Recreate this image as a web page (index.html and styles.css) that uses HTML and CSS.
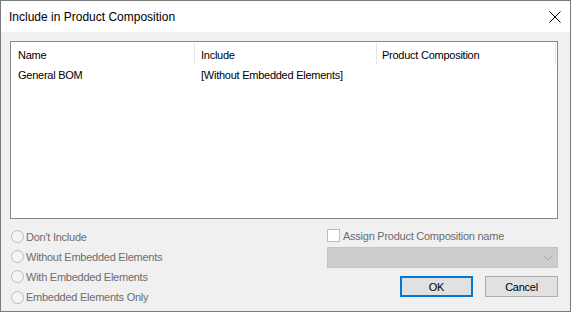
FILE: index.html
```html
<!DOCTYPE html>
<html lang="en">

<head>
  <meta charset="UTF-8">
  <title>Include in Product Composition</title>
  <link rel="stylesheet" href="styles.css">
</head>

<body>

  <div class="window">
    <div class="titlebar">
      <span class="title">Include in Product Composition</span>
      <span class="close">
        <svg width="12" height="12" viewBox="0 0 12 12">
          <path d="M0.5 0.5 L11.5 11.5 M11.5 0.5 L0.5 11.5" stroke="#000" stroke-width="1" fill="none" />
        </svg>
      </span>
    </div>

    <div class="dialog-body">
      <div class="list">
        <div class="list-header">
          <div class="col col-name">Name</div>
          <div class="col col-include">Include</div>
          <div class="col col-comp">Product Composition</div>
        </div>
        <div class="list-row">
          <div class="col col-name">General BOM</div>
          <div class="col col-include">[Without Embedded Elements]</div>
          <div class="col col-comp"></div>
        </div>
      </div>

      <div class="lower">
        <div class="options">
          <label class="radio row-a"><span class="dot"></span>Don't Include</label>
          <label class="radio row-b"><span class="dot"></span>Without Embedded Elements</label>
          <label class="radio row-c"><span class="dot"></span>With Embedded Elements</label>
          <label class="radio row-d"><span class="dot"></span>Embedded Elements Only</label>
        </div>

        <div class="assign">
          <label class="check"><span class="box"></span>Assign Product Composition name</label>
          <div class="combo">
            <svg width="10" height="6" viewBox="0 0 10 6">
              <polyline points="0.5,0.5 5,5 9.5,0.5" stroke="#a8a8a8" stroke-width="1" fill="none" />
            </svg>
          </div>
          <div class="buttons">
            <button class="btn btn-default">OK</button>
            <button class="btn">Cancel</button>
          </div>
        </div>
      </div>
    </div>
  </div>

</body>

</html>
```

FILE: styles.css
```css
body {
  margin: 0;
  font-family: "Liberation Sans", Arial, sans-serif;
  font-size: 11px;
  letter-spacing: -0.25px;
  color: #000;
  background-color: #f0f0f0;
}

.window {
  width: 571px;
  height: 312px;
  box-sizing: border-box;
  border: 1px solid #7a7a7a;
  display: flex;
  flex-direction: column;
  background-color: #f0f0f0;
}

.titlebar {
  height: 31px;
  background-color: #ffffff;
  display: flex;
  align-items: center;
  justify-content: space-between;
  padding: 0 9px 0 8px;
  flex-shrink: 0;
}

.title {
  font-size: 12px;
  letter-spacing: 0;
  margin-top: 1px;
}

.close {
  display: flex;
  margin-top: 1px;
}

.dialog-body {
  flex: 1;
  padding: 9px 12px 0 9px;
}

/* list view */
.list {
  width: 548px;
  height: 178px;
  box-sizing: border-box;
  border: 1px solid #828790;
  background-color: #ffffff;
}

.list-header,
.list-row {
  display: flex;
}

.list-header {
  height: 23px;
}

.list-row {
  height: 20px;
  align-items: center;
}

.col {
  box-sizing: border-box;
  white-space: nowrap;
}

.col-name {
  width: 184px;
  padding-left: 7px;
}

.col-include {
  width: 182px;
  padding-left: 6px;
}

.col-comp {
  width: 179px;
  padding-left: 5px;
}

.list-header .col {
  border-right: 1px solid #e5e5e5;
  height: 22px;
  line-height: 24px;
  margin-top: 1px;
}

/* lower area */
.lower {
  display: flex;
  justify-content: space-between;
  margin-top: 7px;
}

.options {
  display: flex;
  flex-direction: column;
}

.radio,
.check {
  display: flex;
  align-items: center;
  color: #6d6d6d;
}

.row-a,
.row-c {
  height: 21px;
}

.row-b {
  height: 19px;
}

.row-d {
  height: 20px;
}

.dot {
  width: 13px;
  height: 13px;
  box-sizing: border-box;
  border: 1px solid #bcbcbc;
  border-radius: 50%;
  background-color: #f4f4f4;
  margin: 0 2px 0 1px;
}

.assign {
  width: 231px;
  display: flex;
  flex-direction: column;
}

.check {
  height: 19px;
}

.box {
  width: 13px;
  height: 13px;
  box-sizing: border-box;
  border: 1px solid #bcbcbc;
  background-color: #ffffff;
  margin-right: 3px;
}

.combo {
  height: 21px;
  margin-top: 2px;
  box-sizing: border-box;
  border: 1px solid #c4c4c4;
  background-color: #cccccc;
  display: flex;
  align-items: center;
  justify-content: flex-end;
  padding-right: 4px;
}

.buttons {
  display: flex;
  justify-content: flex-end;
  gap: 12px;
  margin-top: 8px;
}

.btn {
  width: 73px;
  height: 21px;
  box-sizing: border-box;
  padding: 0;
  font-family: inherit;
  font-size: 11px;
  letter-spacing: inherit;
  color: #000;
  background-color: #e1e1e1;
  border: 1px solid #adadad;
}

.btn-default {
  border: 2px solid #0078d7;
}
```
